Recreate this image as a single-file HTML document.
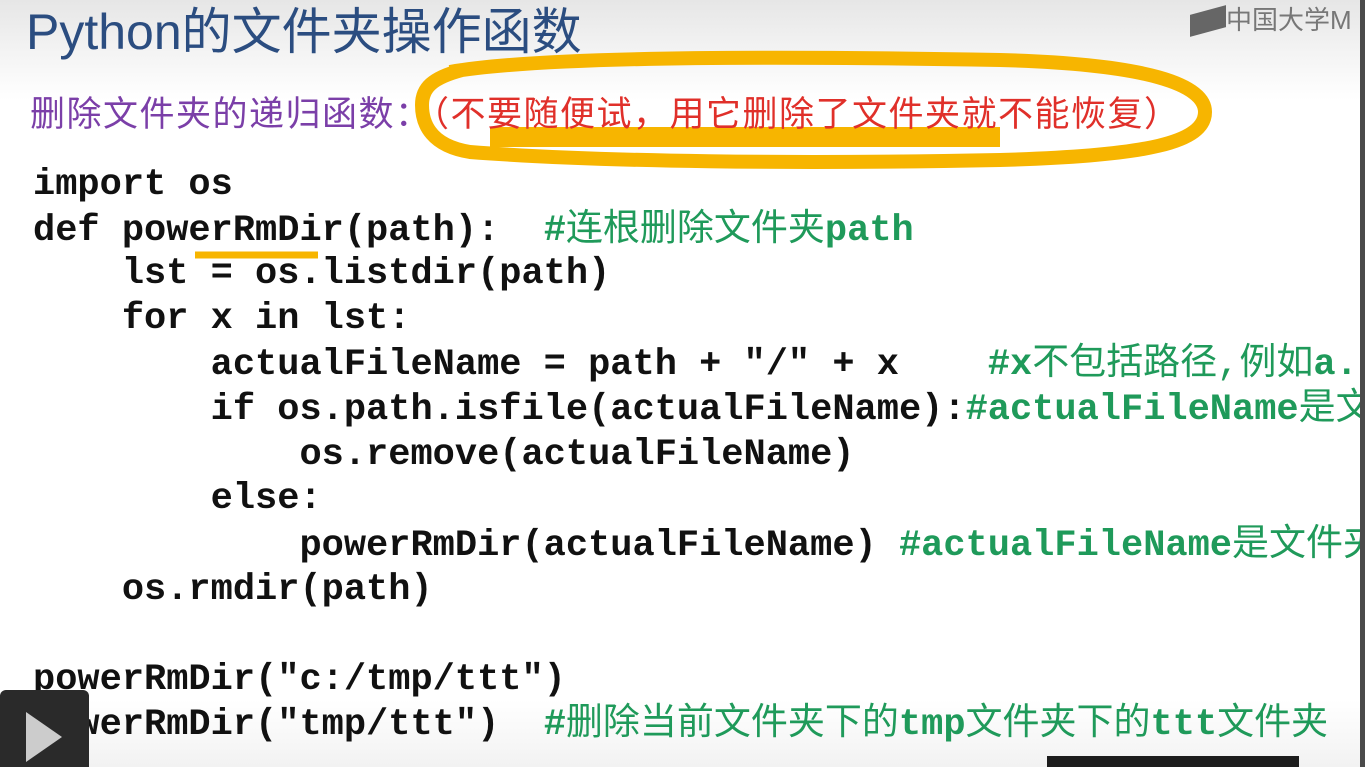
<!DOCTYPE html>
<html><head><meta charset="utf-8"><style>
html,body{margin:0;padding:0}
body{width:1365px;height:767px;overflow:hidden;position:relative;background:#fff;}
.bg{position:absolute;left:0;top:0;width:1360px;height:767px;overflow:hidden;background:linear-gradient(#e6e6e6 0,#f3f3f3 50px,#fff 100px,#fff 700px,#f2f2f2 767px);}
.strip{position:absolute;left:1360px;top:0;width:5px;height:767px;background:#4a4a4a}
.title{position:absolute;left:26px;top:-8px;font:50px "Liberation Sans","Noto Sans CJK SC",sans-serif;color:#2b4d80;white-space:nowrap}
.logo{position:absolute;left:1190px;top:0;font:26px "Liberation Sans","Noto Sans CJK SC",sans-serif;color:#777;white-space:nowrap}
.sub{position:absolute;left:30px;top:86px;font:35px "Liberation Sans","Noto Sans CJK SC",sans-serif;color:#7b3fa8;white-space:nowrap;letter-spacing:1.5px}
.sub span{color:#e0302a}
.c{position:absolute;left:33px;font:bold 37px/1 "Liberation Mono","Noto Sans CJK SC",monospace;color:#111;white-space:pre}
.g{color:#1f9a5a}
.g i{font-style:normal;font-weight:normal}
</style></head><body>
<div class="bg">
<svg style="position:absolute;left:0;top:0" width="1360" height="767">
<path d="M450 72 C540 56 780 56 1000 60 C1150 64 1205 85 1205 112 C1205 142 1150 156 1000 160 C800 164 600 162 470 152 C432 146 422 125 422 105 C422 88 432 78 462 70" fill="none" stroke="#f7b500" stroke-width="14"/>
<rect x="490" y="127" width="510" height="20" fill="#f7b500"/>
<path d="M195 255 L318 255" stroke="#f7b500" stroke-width="7"/>
</svg>
<div class="title">Python的文件夹操作函数</div>
<div class="logo"><span style="display:inline-block;width:36px;height:22px;background:#666;vertical-align:-3px;transform:skewY(-15deg)"></span>中国大学M</div>
<div class="sub">删除文件夹的递归函数：<span>（不要随便试，用它删除了文件夹就不能恢复）</span></div>
<div class="c" style="top:167px">import os</div>
<div class="c" style="top:213px">def powerRmDir(path):  <span class="g">#<i>连根删除文件夹</i>path</span></div>
<div class="c" style="top:256px">    lst = os.listdir(path)</div>
<div class="c" style="top:301px">    for x in lst:</div>
<div class="c" style="top:347px">        actualFileName = path + "/" + x    <span class="g">#x<i>不包括路径,例如</i>a.txt</span></div>
<div class="c" style="top:392px">        if os.path.isfile(actualFileName):<span class="g">#actualFileName<i>是文件</i></span></div>
<div class="c" style="top:437px">            os.remove(actualFileName)</div>
<div class="c" style="top:481px">        else:</div>
<div class="c" style="top:528px">            powerRmDir(actualFileName) <span class="g">#actualFileName<i>是文件夹</i></span></div>
<div class="c" style="top:572px">    os.rmdir(path)</div>
<div class="c" style="top:662px">powerRmDir("c:/tmp/ttt")</div>
<div class="c" style="top:707px">powerRmDir("tmp/ttt")  <span class="g">#<i>删除当前文件夹下的</i>tmp<i>文件夹下的</i>ttt<i>文件夹</i></span></div>
<div style="position:absolute;left:0;top:690px;width:89px;height:77px;background:#2a2a2a;border-radius:6px 6px 0 0"></div>
<svg style="position:absolute;left:24px;top:712px" width="40" height="50"><path d="M2 0 L38 25 L2 50 Z" fill="#ccc"/></svg>
<div style="position:absolute;left:1047px;top:756px;width:252px;height:11px;background:#1c1c1c"></div>
</div>
<div class="strip"></div>
</body></html>
